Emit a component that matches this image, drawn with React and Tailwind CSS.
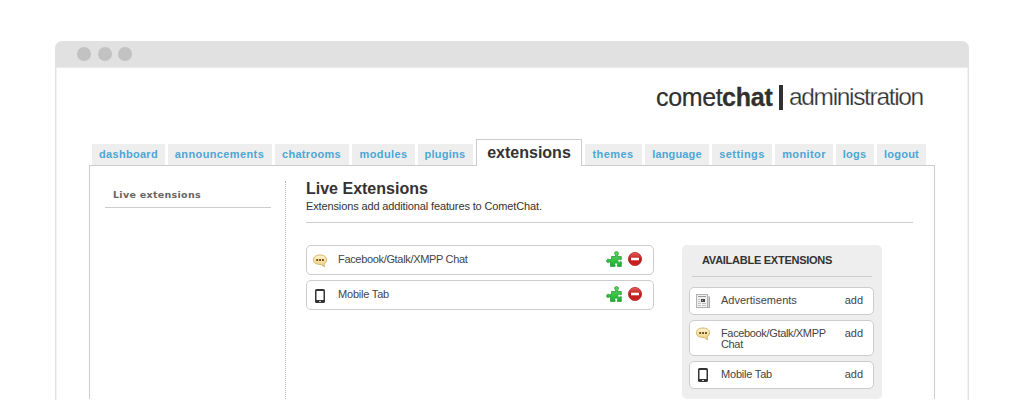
import React from "react";

const tabs = [
  ["dashboard", "w-[73px]", "tracking-[0.3px]"],
  ["announcements", "w-[104px]", "tracking-[0.38px] pr-[1px]"],
  ["chatrooms", "w-[74px]", "tracking-[0.32px] pr-[1px]"],
  ["modules", "w-[63px]", "tracking-[0.38px]"],
  ["plugins", "w-[55px]", "tracking-[0.25px] pr-[1px]"],
  ["extensions", "w-[106px]", ""],
  ["themes", "w-[57px]", "tracking-[0.4px] pr-[1px]"],
  ["language", "w-[64px]", "tracking-[0.15px]"],
  ["settings", "w-[60px]", "tracking-[0.4px]"],
  ["monitor", "w-[58px]", "tracking-[0.4px]"],
  ["logs", "w-[38px]", "tracking-[0.2px] pr-[1px]"],
  ["logout", "w-[49px]", "tracking-[0.25px]"],
];

function ChatIcon() {
  return (
    <svg width="16" height="16" viewBox="0 0 16 16">
      <defs>
        <linearGradient id="bubble" x1="0" y1="0" x2="0" y2="1">
          <stop offset="0" stopColor="#fdf4d0" />
          <stop offset="1" stopColor="#efd078" />
        </linearGradient>
      </defs>
      <path
        d="M8 2c3.900 0 6.600 1.900 6.600 4.700 0 1.700-1 3.100-2.600 3.900.1 1.300.3 2.200.6 3.100-1.500-.5-2.500-1.300-3.200-2.300H8c-3.900 0-6.600-1.900-6.600-4.700S4.100 2 8 2z"
        fill="url(#bubble)"
        stroke="#d0aa5c"
        strokeWidth="0.900"
      />
      <path d="M4.200 6h1.900v1.900H4.200zM7.100 6H9v1.900H7.100zM10 6h1.900v1.900H10z" fill="#755126" />
    </svg>
  );
}

function PhoneIcon() {
  return (
    <svg width="16" height="16" viewBox="0 0 16 16">
      <rect x="3" y="1" width="10" height="14" rx="1.600" fill="#333" />
      <rect x="4.500" y="3" width="7" height="9" fill="#fff" />
      <rect x="7" y="13" width="2" height="1" fill="#ddd" />
    </svg>
  );
}

function NewsIcon() {
  return (
    <svg width="16" height="16" viewBox="0 0 16 16" shapeRendering="crispEdges">
      <path d="M12 3h3v11h-3z" fill="#d5d5d5" />
      <path d="M1.500 1.500h11v13h-11z" fill="#f1f1f1" stroke="#b0b0b0" />
      <path d="M14.500 4v10.500H12" fill="none" stroke="#aaa" />
      <path d="M3 3h8v1H3z" fill="#999" />
      <path d="M3 6h2v1H3zM3 8h2v1H3zM3 10h3v1H3zM3 12h3v1H3zM7 10h4v1H7zM7 12h4v1H7z" fill="#c0c0c0" />
      <path d="M6 6h4v3H6z" fill="#444" />
      <path d="M7 7h1v1H7z" fill="#aaa" />
    </svg>
  );
}

function PuzzleIcon() {
  return (
    <svg width="16" height="16" viewBox="0 0 16 16">
      <defs>
        <linearGradient id="puzzle" x1="0" y1="0" x2="0" y2="1">
          <stop offset="0" stopColor="#5fd862" />
          <stop offset="1" stopColor="#16b52b" />
        </linearGradient>
      </defs>
      <path
        d="M5.500 5.500h4.100V4C8 3 8.400.6 10.500.6S13 3 11.600 4v1.500h3.700v3.200h-1c-1-.9-2.500-.5-2.500 1s1.500 2 2.500 1h1v4.700h-4v-1c.8-1.400.2-2.400-1.100-2.400s-2 1-1.100 2.400v1H4.500v-4.500H3.300C2.200 12 .6 11.500.6 9.900s1.700-2.200 2.700-1.300h2.200z"
        fill="url(#puzzle)"
        stroke="#1c8f2c"
        strokeWidth="0.700"
      />
    </svg>
  );
}

function RemoveIcon() {
  return (
    <svg width="16" height="16" viewBox="0 0 16 16">
      <defs>
        <linearGradient id="remove" x1="0" y1="0" x2="0" y2="1">
          <stop offset="0" stopColor="#e0605c" />
          <stop offset="0.500" stopColor="#c21a1a" />
          <stop offset="1" stopColor="#cf2020" />
        </linearGradient>
      </defs>
      <circle cx="8" cy="8" r="6.600" fill="url(#remove)" stroke="#b03030" strokeWidth="0.800" />
      <rect x="4" y="6.700" width="8" height="2.600" fill="#fff" />
    </svg>
  );
}

function LiveRow({ icon, label, tracking }) {
  return (
    <div className="flex h-[30px] w-[348px] rounded-[5px] border border-[#ccc] bg-white pt-[5px] pr-[10px] pl-[5px]">
      <div className="mt-[2px] h-4 w-4">{icon}</div>
      <div className={"ml-[10px] flex-1 text-[11px] leading-[16px] text-[#444] " + tracking}>{label}</div>
      <PuzzleIcon />
      <div className="ml-[5px]">
        <RemoveIcon />
      </div>
    </div>
  );
}

function AvailableRow({ icon, label, size, tracking }) {
  return (
    <div className={"flex w-[185px] rounded-[5px] border border-[#ccc] bg-white pt-[5px] pl-[5px] pr-[10px] " + size}>
      <div className="h-4 w-4">{icon}</div>
      <div className={"mt-[2px] ml-[10px] w-[118px] text-[11px] leading-[11px] text-[#444] " + tracking}>{label}</div>
      <div className="mt-[2px] ml-[6px] text-[11px] leading-[11px] text-[#444]">add</div>
    </div>
  );
}

export default function App() {
  return (
    <div className="h-[400px] w-[1024px] overflow-hidden bg-white pt-[41px] pl-[55px] font-['Liberation_Sans',Arial,sans-serif]">
      <div className="flex h-[359px] w-[914px] flex-col rounded-t-[7px] bg-[#e1e1e1]">
        <div className="flex h-[27px] shrink-0 items-center gap-[6.500px] border-b border-[#ebebeb] pl-[22px]">
          <span className="h-[14px] w-[14px] rounded-full bg-[#c2c2c2]" />
          <span className="h-[14px] w-[14px] rounded-full bg-[#c2c2c2]" />
          <span className="h-[14px] w-[14px] rounded-full bg-[#c2c2c2]" />
        </div>
        <div className="mx-px flex-1 border-x border-[#f2f2f2] bg-white pl-[32px]">
          <div className="flex h-[71px] items-start pt-[15px] pl-[567px] text-[25px] leading-[28px] text-[#303030]">
            <span className="w-[66px] tracking-[-0.350px] [-webkit-text-stroke:0.200px_#303030]">comet</span>
            <span className="w-[50px] font-bold tracking-[-0.200px] [-webkit-text-stroke:0.300px_#303030]">chat</span>
            <span className="mt-[2px] ml-[7px] mr-[6px] h-[25px] w-[4px] bg-[#303030]" />
            <span className="text-[24.500px] tracking-[-1.330px] [-webkit-text-stroke:0.250px_white]">administration</span>
          </div>
          <div className="flex h-[27px] items-end gap-[3px] pl-[3px]">
            {tabs.map(([name, width, tracking]) =>
              name === "extensions" ? (
                <div
                  key={name}
                  className={"relative h-[27px] border border-b-0 border-[#ccc] bg-white text-center text-[16px] leading-[25px] font-bold text-[#333] " + width}
                >
                  {name}
                </div>
              ) : (
                <div
                  key={name}
                  className={"mb-px h-[21px] bg-[#eee] text-center text-[11px] leading-[20px] font-bold text-[#4ca6d6] " + width + " " + tracking}
                >
                  {name}
                </div>
              )
            )}
          </div>
          <div className="-mt-px flex h-[234px] w-[846px] border border-b-0 border-[#ccc] pt-[15px] pl-[15px]">
            <div className="h-[27px] w-[166px] border-b border-[#ccc] pl-2 font-['DejaVu_Sans',sans-serif] text-[9.500px] leading-[28px] font-bold tracking-[0.300px] text-[#666]">
              Live extensions
            </div>
            <div className="ml-[14px] border-l border-dotted border-[#bbb]" />
            <div className="ml-[20px] w-[607px]">
              <div className="h-[42px] border-b border-[#ccc]">
                <h1 className="text-[16px] leading-[15px] font-bold text-[#333]">Live Extensions</h1>
                <p className="mt-[4px] text-[11px] leading-[13px] tracking-[-0.130px] text-[#333]">
                  Extensions add additional features to CometChat.
                </p>
              </div>
              <div className="mt-[22px] flex">
                <div className="flex flex-col gap-[5px]">
                  <LiveRow icon={<ChatIcon />} label="Facebook/Gtalk/XMPP Chat" tracking="tracking-[-0.330px]" />
                  <LiveRow icon={<PhoneIcon />} label="Mobile Tab" tracking="tracking-[-0.200px]" />
                </div>
                <div className="ml-[28px] h-[154px] w-[200px] shrink-0 rounded-[5px] bg-[#eee] pl-[7px]">
                  <div className="ml-[3px] h-[32px] w-[180px] border-b border-[#ccc] pl-[10px] text-[11px] leading-[31px] font-bold tracking-[-0.260px] text-[#333]">
                    AVAILABLE EXTENSIONS
                  </div>
                  <div className="mt-[10px] flex flex-col gap-[5px]">
                    <AvailableRow icon={<NewsIcon />} label="Advertisements" size="h-[28px]" tracking="" />
                    <AvailableRow
                      icon={<ChatIcon />}
                      label={<>Facebook/Gtalk/XMPP<br />Chat</>}
                      size="h-[36px]"
                      tracking="tracking-[-0.350px]"
                    />
                    <AvailableRow icon={<PhoneIcon />} label="Mobile Tab" size="h-[28px]" tracking="tracking-[-0.200px]" />
                  </div>
                </div>
              </div>
            </div>
          </div>
        </div>
      </div>
    </div>
  );
}
